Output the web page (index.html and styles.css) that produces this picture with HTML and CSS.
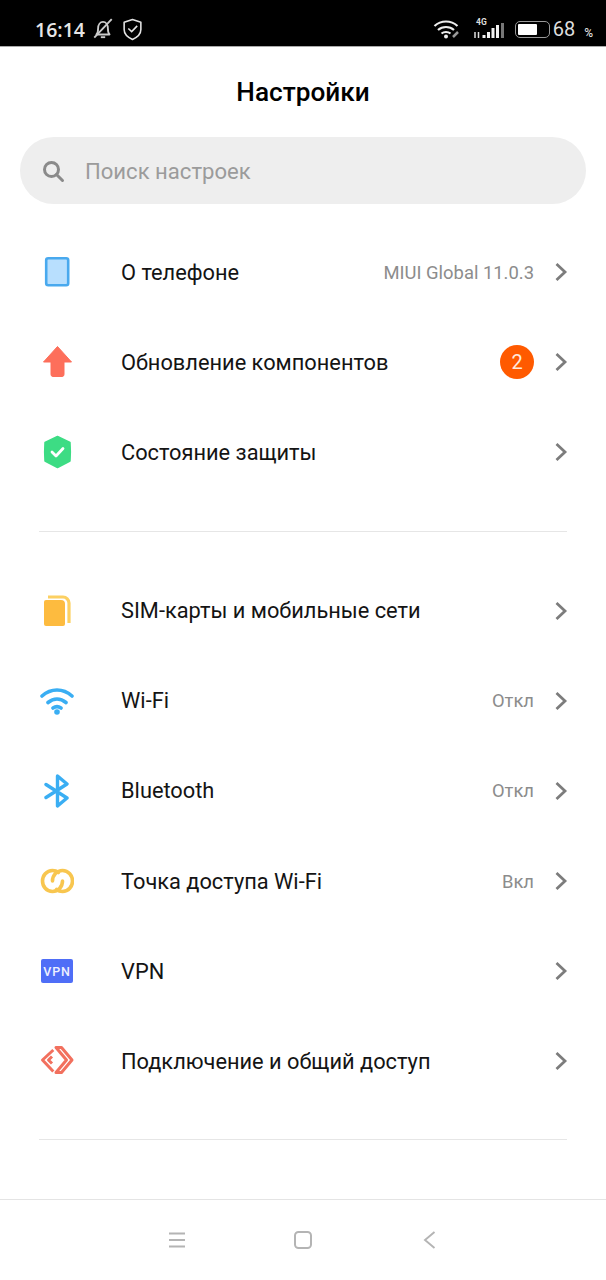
FILE: index.html
```html
<!DOCTYPE html>
<html lang="ru">
<head>
<meta charset="utf-8">
<title>Настройки</title>
<link rel="stylesheet" href="styles.css">
</head>
<body>
<div class="screen">
  <header class="status">
    <div class="status-left">
      <span class="time">16:14</span>
      <svg class="st-bell" viewBox="0 0 22 22"><path d="M5 16c1.500-1.500 1.500-3 1.500-5.500C6.500 7 8.500 4.500 11 4.500s4.500 2.500 4.500 6c0 2.500 0 4 1.500 5.500z" fill="none" stroke="#ccc" stroke-width="1.700" stroke-linejoin="round"/><path d="M9 18.500h4" stroke="#ccc" stroke-width="1.700"/><path d="M3 19L19 2" stroke="#ccc" stroke-width="1.700"/></svg>
      <svg class="st-shield" viewBox="0 0 20 22"><path d="M10 1.500l8 2.500v7c0 4.500-3.500 7.500-8 9.500-4.500-2-8-5-8-9.500V4z" fill="none" stroke="#e4e4e4" stroke-width="1.500" stroke-linejoin="round"/><path d="M6 10l3.200 3L14.500 7.500" fill="none" stroke="#e4e4e4" stroke-width="1.500"/></svg>
    </div>
    <div class="status-right">
      <svg class="st-wifi" viewBox="0 0 28 20"><path d="M1.500 7C8 1 18 1 24.500 7M5 11c4.500-4 11.500-4 16 0M8.500 14.500c2.500-2 6.500-2 9 0" fill="none" stroke="#eee" stroke-width="2.200"/><circle cx="13" cy="17.500" r="2" fill="#eee"/><path d="M20 18l5-5" stroke="#999" stroke-width="2.500"/></svg>
      <svg class="st-signal" viewBox="0 0 33 24"><text x="3" y="8" class="st-4g">4G</text><path d="M2 15v6M5.500 15v6" stroke="#ddd" stroke-width="1.500"/><path d="M9.500 21v-3h3v3zM14 21v-6h3v6zM18.500 21V11h3v10zM23 21V8h3v13z" fill="#f2f2f2"/><path d="M28 21V6h3v15z" fill="#777"/></svg>
      <div class="battery"><div class="battery-fill"></div></div>
      <span class="pct">68</span><span class="pct-sign">%</span>
    </div>
  </header>

  <main class="content">
    <h1 class="title">Настройки</h1>
    <div class="search">
      <svg class="search-icon" viewBox="0 0 24 24"><circle cx="10.500" cy="10.500" r="7" fill="none" stroke="#8a8a8a" stroke-width="3"/><path d="M15.500 15.500l6 6" stroke="#8a8a8a" stroke-width="3" stroke-linecap="round"/></svg>
      <span class="search-text">Поиск настроек</span>
    </div>

    <section class="group">
      <div class="row">
        <svg class="ico" viewBox="0 0 34 34"><rect x="6.200" y="3.200" width="22" height="27" rx="2" fill="#b8dffe" stroke="#49a9ee" stroke-width="2.600"/></svg>
        <span class="label">О телефоне</span>
        <span class="value">MIUI Global 11.0.3</span>
        <svg class="chev" viewBox="0 0 14 20"><path d="M2.500 2l8.500 8-8.500 8" /></svg>
      </div>
      <div class="row">
        <svg class="ico" viewBox="0 0 34 34"><path d="M17.500 1.500L31.500 17h-7.500v12.500a2 2 0 0 1-2 2h-9a2 2 0 0 1-2-2V17H3.500z" fill="#fd6f5b" stroke="#fd6f5b" stroke-linejoin="round"/></svg>
        <span class="label">Обновление компонентов</span>
        <span class="badge">2</span>
        <svg class="chev" viewBox="0 0 14 20"><path d="M2.500 2l8.500 8-8.500 8" /></svg>
      </div>
      <div class="row">
        <svg class="ico" viewBox="0 0 34 34"><path d="M17.500 1.500l12.500 6c.5 7 .5 12 0 18.500L17.500 32.500 5 26c-.5-6.500-.5-11.500 0-18.500z" fill="#3ddc84" stroke="#3ddc84" stroke-width="1.500" stroke-linejoin="round"/><path d="M12 17l4 4 7-7.500" fill="none" stroke="#fff" stroke-width="2.800" stroke-linecap="round" stroke-linejoin="round"/></svg>
        <span class="label">Состояние защиты</span>
        <svg class="chev" viewBox="0 0 14 20"><path d="M2.500 2l8.500 8-8.500 8" /></svg>
      </div>
    </section>

    <hr class="divider">

    <section class="group">
      <div class="row">
        <svg class="ico" viewBox="0 0 34 34"><path d="M8 3h15a6 6 0 0 1 6 6v20" fill="none" stroke="#fcd062" stroke-width="3.200"/><path d="M6 6h15a4 4 0 0 1 4 4v20a2 2 0 0 1-2 2H6a2 2 0 0 1-2-2V8a2 2 0 0 1 2-2z" fill="#fdbb3f"/></svg>
        <span class="label">SIM-карты и мобильные сети</span>
        <svg class="chev" viewBox="0 0 14 20"><path d="M2.500 2l8.500 8-8.500 8" /></svg>
      </div>
      <div class="row">
        <svg class="ico" viewBox="0 0 34 34"><path d="M2 12c9-8 21-8 30 0M8 18.500c5.500-4.500 12.500-4.500 18 0M13 24c2.500-1.700 5.500-1.700 8 0" fill="none" stroke="#3aaef3" stroke-width="3.600" stroke-linecap="round"/><circle cx="17" cy="28" r="2.800" fill="#3aaef3"/></svg>
        <span class="label">Wi-Fi</span>
        <span class="value">Откл</span>
        <svg class="chev" viewBox="0 0 14 20"><path d="M2.500 2l8.500 8-8.500 8" /></svg>
      </div>
      <div class="row">
        <svg class="ico" viewBox="0 0 34 34"><path d="M6 10.500L27 24l-9.500 8V2L27 10 6 23.500" fill="none" stroke="#3aaef3" stroke-width="3.400" stroke-linecap="round" stroke-linejoin="round"/></svg>
        <span class="label">Bluetooth</span>
        <span class="value">Откл</span>
        <svg class="chev" viewBox="0 0 14 20"><path d="M2.500 2l8.500 8-8.500 8" /></svg>
      </div>
      <div class="row">
        <svg class="ico" viewBox="0 0 34 34"><path d="M18.500 8.500C16.500 7 15 6.500 12.500 6.500 6.500 6.500 2.500 11.500 2.500 17s4 10.500 10 10.500c5.500 0 10-4.500 10-10.500" fill="none" stroke="#f8c64f" stroke-width="3.600" stroke-linecap="round"/><path d="M16.500 25.500c2 1.500 3.500 2 6 2 6 0 10-5 10-10.500S28.500 6.500 22.500 6.500c-5.500 0-10 4.500-10 10.500" fill="none" stroke="#f8c64f" stroke-width="3.600" stroke-linecap="round"/></svg>
        <span class="label">Точка доступа Wi-Fi</span>
        <span class="value">Вкл</span>
        <svg class="chev" viewBox="0 0 14 20"><path d="M2.500 2l8.500 8-8.500 8" /></svg>
      </div>
      <div class="row">
        <div class="vpn-slot"><div class="vpn">VPN</div></div>
        <span class="label">VPN</span>
        <svg class="chev" viewBox="0 0 14 20"><path d="M2.500 2l8.500 8-8.500 8" /></svg>
      </div>
      <div class="row">
        <svg class="ico" viewBox="0 0 34 34"><path d="M16 3.500h5.500L32 16 21.500 28.500H16L26.500 16z" fill="none" stroke="#f2705e" stroke-width="3" stroke-linejoin="round"/><path d="M13.300 6L2.500 16l10.800 11.500M12 12.500L8.500 16l3.500 3.500" fill="none" stroke="#f2705e" stroke-width="3" stroke-linejoin="round"/></svg>
        <span class="label">Подключение и общий доступ</span>
        <svg class="chev" viewBox="0 0 14 20"><path d="M2.500 2l8.500 8-8.500 8" /></svg>
      </div>
    </section>

    <hr class="divider divider-last">
  </main>

  <nav class="navbar">
    <svg class="nav-ico" viewBox="0 0 20 20"><path d="M2 3.500h16M2 10h16M2 16.500h16" stroke="#b4b4b4" stroke-width="2"/></svg>
    <svg class="nav-ico" viewBox="0 0 20 20"><rect x="2" y="2" width="16" height="16" rx="3.500" fill="none" stroke="#b4b4b4" stroke-width="2"/></svg>
    <svg class="nav-ico" viewBox="0 0 20 20"><path d="M15.500 2L6 10l9.500 8" fill="none" stroke="#b4b4b4" stroke-width="1.900"/></svg>
  </nav>
</div>
</body>
</html>
```

FILE: styles.css
```css
* { box-sizing: border-box; }
html, body { margin: 0; padding: 0; background: #fff; }
body { font-family: Roboto, "Noto Sans", sans-serif; color: #111; }
.screen { width: 606px; height: 1280px; display: flex; flex-direction: column; overflow: hidden; }

.status { height: 47px; flex: none; background: #000; border-bottom: 1px solid #aaa; display: flex; justify-content: space-between; align-items: center; padding: 12px 13px 0 35px; color: #eee; }
.status-left, .status-right { display: flex; align-items: center; }
.time { font-family: "Open Sans", sans-serif; font-size: 19.500px; font-weight: 600; color: #e6e6e6; }
.st-bell { width: 24px; height: 24px; margin-left: 6px; }
.st-shield { width: 21px; height: 23px; margin-left: 7px; }
.st-wifi { width: 28px; height: 20px; }
.st-signal { width: 33px; height: 24px; margin-left: 12px; }
.st-4g { font: 700 8.500px Roboto, sans-serif; fill: #ddd; }
.battery { width: 35px; height: 17px; margin-left: 9px; border: 1.500px solid #999; border-radius: 5px; padding: 2px; }
.battery-fill { width: 66%; height: 100%; background: #fff; border-radius: 1px; }
.pct { font-size: 20px; margin-left: 3px; color: #ddd; }
.pct-sign { font-size: 12px; font-weight: 500; margin-left: 9px; margin-top: 7px; color: #ddd; }

.content { flex: 1; display: flex; flex-direction: column; padding: 0; }
.title { margin: 0; height: 90px; display: flex; align-items: center; justify-content: center; font-size: 26.200px; font-weight: 500; color: #000; }

.search { height: 67px; margin: 0 20px 23px; background: #eeeeee; border-radius: 34px; display: flex; align-items: center; padding-left: 21px; }
.search-icon { width: 24px; height: 24px; }
.search-text { font-size: 22.100px; color: #9b9b9b; margin-left: 20px; padding-top: 1px; }

.row { height: 90.170px; display: flex; align-items: center; padding: 0 38px 0 40px; }
.ico { width: 34px; height: 34px; flex: none; }
.vpn-slot { width: 34px; height: 34px; flex: none; display: flex; align-items: center; justify-content: center; }
.vpn { width: 32px; height: 24px; background: #4f6ef7; border-radius: 2px; color: #eef1ff; font-size: 12.500px; font-weight: 500; letter-spacing: .8px; display: flex; align-items: center; justify-content: center; }
.label { font-size: 21.800px; color: #141414; margin-left: 47px; flex: 1; white-space: nowrap; }
.value { font-size: 18.400px; color: #8c8c8c; margin-right: 20px; }
.badge { width: 34px; height: 34px; border-radius: 50%; background: #ff5a00; color: #ffe9dc; font-size: 20px; display: flex; align-items: center; justify-content: center; margin-right: 20px; }
.chev { width: 14px; height: 20px; flex: none; }
.chev path { fill: none; stroke: #7c7c7c; stroke-width: 2.800; }

.divider { border: 0; height: 1px; background: #e6e6e6; margin: 34px 39px 33px; flex: none; }
.divider-last { margin-top: 33px; margin-bottom: 0; }

.navbar { height: 81px; flex: none; border-top: 1px solid #e4e4e4; display: flex; justify-content: space-between; align-items: center; padding: 0 167px; }
.nav-ico { width: 20px; height: 20px; }
```
